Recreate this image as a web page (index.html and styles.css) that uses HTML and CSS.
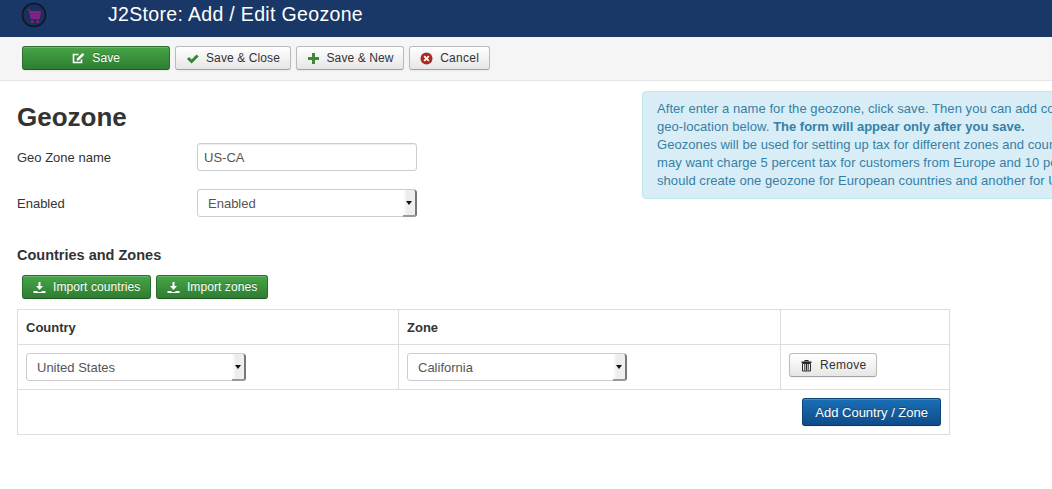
FILE: index.html
```html
<!DOCTYPE html>
<html>
<head>
  <title>J2Store: Add / Edit Geozone</title>
  <link rel="stylesheet" href="styles.css">
</head>
<body>

<header class="page-header">
  <svg class="logo" width="26" height="26" viewBox="0 0 26 26">
    <circle cx="13" cy="13" r="11.5" fill="#1a2f5c" stroke="#12151f" stroke-width="1.5"/>
    <path d="M6.5 7.5h2l.8 2h10.200l-1.200 7h-8.200l-1.600-8" fill="#8f1f86" stroke="#8f1f86" stroke-width="1"/>
    <path d="M11.500 9.500v7M14 9.500v7M16.500 9.500v7M9.500 12h10M10 14.500h9" stroke="#5f2a7c" stroke-width=".6"/>
    <rect x="10" y="18.500" width="2.400" height="2.400" fill="#8f1f86"/>
    <rect x="15.500" y="18.500" width="2.400" height="2.400" fill="#8f1f86"/>
  </svg>
  <h1 class="page-title">J2Store: Add / Edit Geozone</h1>
</header>

<div class="toolbar">
  <button type="button" class="btn btn-success btn-save">
    <svg class="icon" width="13" height="13" viewBox="0 0 13 13"><path d="M9.500 7.500v3h-8v-8h5" fill="none" stroke="#fff" stroke-width="1.600"/><path d="M5 6.500 10.500 1l1.800 1.800L6.800 8.300 4.600 8.700z" fill="#fff"/></svg>
    Save
  </button>
  <button type="button" class="btn">
    <svg class="icon" width="13" height="13" viewBox="0 0 13 13"><path d="M1 7l2-2 2.600 2.600L10.600 2.500l2 2-7 7z" fill="#2f8534"/></svg>
    Save &amp; Close
  </button>
  <button type="button" class="btn">
    <svg class="icon" width="13" height="13" viewBox="0 0 13 13"><path d="M5 1h3v4h4v3H8v4H5V8H1V5h4z" fill="#3d8b37"/></svg>
    Save &amp; New
  </button>
  <button type="button" class="btn btn-loose">
    <svg class="icon" width="13" height="13" viewBox="0 0 13 13"><circle cx="6.500" cy="6.500" r="6" fill="#a92a20"/><path d="M4.200 4.200l4.600 4.600M8.800 4.200L4.200 8.800" stroke="#fff" stroke-width="1.800"/></svg>
    Cancel
  </button>
</div>

<main class="content">
  <div class="top-row">
    <form class="geo-form" action="#" method="post">
      <h2 class="form-title">Geozone</h2>
      <div class="form-row">
        <label class="form-label" for="id_name">Geo Zone name</label>
        <input class="text-input" type="text" id="id_name" value="US-CA">
      </div>
      <div class="form-row">
        <label class="form-label" for="id_enabled">Enabled</label>
        <div class="select-box">
          <select id="id_enabled"><option>Enabled</option><option>Disabled</option></select>
        </div>
      </div>
    </form>

    <div class="alert-info">
      After enter a name for the geozone, click save. Then you can add countries and zones to this<br>
      geo-location below. <b>The form will appear only after you save.</b><br>
      Geozones will be used for setting up tax for different zones and countries. For example, you<br>
      may want charge 5 percent tax for customers from Europe and 10 percent for the US. So you<br>
      should create one geozone for European countries and another for US customers.
    </div>
  </div>

  <h3 class="section-title">Countries and Zones</h3>

  <div class="import-row">
    <button type="button" class="btn btn-success">
      <svg class="icon" width="13" height="13" viewBox="0 0 13 13"><path d="M5.500 1h2v4h2.500L6.500 9 3 5h2.500z" fill="#fff"/><path d="M.5 10h3.500l1 1h3l1-1h3.500v2H.5z" fill="#fff"/></svg>
      Import countries
    </button>
    <button type="button" class="btn btn-success">
      <svg class="icon" width="13" height="13" viewBox="0 0 13 13"><path d="M5.500 1h2v4h2.500L6.500 9 3 5h2.500z" fill="#fff"/><path d="M.5 10h3.500l1 1h3l1-1h3.500v2H.5z" fill="#fff"/></svg>
      Import zones
    </button>
  </div>

  <table class="zone-table">
    <tr class="head-row">
      <th class="col-country">Country</th>
      <th class="col-zone">Zone</th>
      <th></th>
    </tr>
    <tr class="zone-row">
      <td>
        <div class="select-box">
          <select><option>United States</option></select>
        </div>
      </td>
      <td>
        <div class="select-box">
          <select><option>California</option></select>
        </div>
      </td>
      <td>
        <button type="button" class="btn btn-loose">
          <svg class="icon" width="13" height="13" viewBox="0 0 13 13"><path d="M1.500 2.500h10V4h-10zM4.500 2.500V1h4v1.500h-1V2h-2v.5z" fill="#2a2a2a"/><path d="M2.500 4.500h8v7.500h-8z" fill="none" stroke="#2a2a2a" stroke-width="1"/><path d="M4.800 5v6.500M6.500 5v6.500M8.200 5v6.500" stroke="#2a2a2a" stroke-width="1"/></svg>
          Remove
        </button>
      </td>
    </tr>
    <tr class="foot-row">
      <td colspan="3">
        <button type="button" class="btn btn-primary">Add Country / Zone</button>
      </td>
    </tr>
  </table>
</main>

</body>
</html>
```

FILE: styles.css
```css
html, body {
  margin: 0;
  height: 100%;
  overflow: hidden;
}

body {
  font: 13px/18px "Liberation Sans", Arial, sans-serif;
  color: #333;
  background-color: #fff;
}

.page-header {
  display: flex;
  align-items: center;
  height: 37px;
  padding-left: 21px;
  background-color: #1a3867;
  box-sizing: border-box;
}

.logo {
  margin-top: -8px;
}

.page-title {
  margin: -9px 0 0 61px;
  font-size: 19.500px;
  line-height: 28px;
  font-weight: normal;
  letter-spacing: .33px;
  color: #fff;
}

.toolbar {
  display: flex;
  gap: 5px;
  height: 44px;
  padding: 9px 0 0 22px;
  box-sizing: border-box;
  background-color: #f5f5f5;
  border-bottom: 1px solid #e5e5e5;
}

.btn {
  display: inline-flex;
  align-items: center;
  justify-content: center;
  gap: 7px;
  height: 24px;
  padding: 0 9.600px 0 10px;
  font: 12px/18px "Liberation Sans", Arial, sans-serif;
  letter-spacing: .1px;
  color: #333;
  background: linear-gradient(#fff, #e6e6e6);
  border: 1px solid #bbb;
  border-bottom-color: #a2a2a2;
  border-radius: 3px;
  box-shadow: inset 0 1px 0 rgba(255, 255, 255, .2), 0 1px 2px rgba(0, 0, 0, .05);
  cursor: pointer;
}

.btn-success {
  color: #fff;
  background: linear-gradient(#46a546, #2f7d32);
  border-color: #2a6d2d #2a6d2d #1e5a21;
  text-shadow: 0 -1px 0 rgba(0, 0, 0, .25);
}

.btn-save {
  width: 148px;
}

.btn-loose {
  letter-spacing: .3px;
}

.btn-primary {
  height: 28px;
  padding: 2px 12px 0;
  font-size: 13px;
  letter-spacing: 0;
  color: #fff;
  background: linear-gradient(#1a6fb5, #0f4c8a);
  border-color: #0e4478 #0e4478 #0a3563;
  text-shadow: 0 -1px 0 rgba(0, 0, 0, .25);
}

.content {
  padding-left: 17px;
}

.top-row {
  display: flex;
  align-items: flex-start;
}

.geo-form {
  flex: none;
  width: 625px;
}

.form-title {
  margin: 20px 0 10px;
  font-size: 26px;
  line-height: 32px;
  font-weight: bold;
}

.form-row {
  display: flex;
  align-items: center;
  margin-bottom: 18px;
}

.form-label {
  width: 180px;
  margin-top: 2px;
}

.text-input {
  width: 220px;
  height: 28px;
  padding: 4px 6px;
  box-sizing: border-box;
  font: 13px/18px "Liberation Sans", Arial, sans-serif;
  color: #555;
  border: 1px solid #ccc;
  border-radius: 3px;
  box-shadow: inset 0 1px 1px rgba(0, 0, 0, .075);
}

.alert-info {
  flex: none;
  width: 600px;
  margin-top: 10px;
  padding: 8px 14px;
  white-space: nowrap;
  letter-spacing: .06px;
  color: #3580a5;
  background-color: #d9edf7;
  border: 1px solid #bce8f1;
  border-radius: 4px;
}

.alert-info b {
  letter-spacing: 0;
}

.select-box {
  position: relative;
  width: 220px;
  height: 28px;
}

.select-box select {
  appearance: none;
  display: block;
  width: 100%;
  height: 28px;
  padding: 2px 10px 0;
  font: 13px/18px "Liberation Sans", Arial, sans-serif;
  color: #555;
  background-color: #fff;
  border: 1px solid #ccc;
  border-radius: 3px;
}

/* the scroll-arrow block on the right of the select */
.select-box::after {
  content: "";
  position: absolute;
  top: 1px;
  right: 0;
  bottom: 0;
  width: 14px;
  box-sizing: border-box;
  background: linear-gradient(to right, #fff, #ececec 35%, #f0f0f0);
  border-right: 2px solid #777;
  border-bottom: 2px solid #999;
  border-radius: 0 3px 3px 0;
  pointer-events: none;
}

.select-box::before {
  content: "";
  position: absolute;
  z-index: 1;
  top: 12px;
  right: 5px;
  border-left: 3px solid transparent;
  border-right: 3px solid transparent;
  border-top: 4px solid #111;
  pointer-events: none;
}

.section-title {
  margin: 10px 0;
  font-size: 14.500px;
  line-height: 20px;
  font-weight: bold;
}

.import-row {
  display: flex;
  gap: 5px;
  margin: 0 0 10px 5px;
}

.import-row .btn {
  letter-spacing: .08px;
}

.zone-table {
  width: 933px;
  border-collapse: collapse;
  table-layout: fixed;
}

.zone-table th,
.zone-table td {
  padding: 8px;
  text-align: left;
  border: 1px solid #ddd;
}

.zone-table th {
  height: 18px;
  padding: 9px 8px 7px;
}

.col-country {
  width: 364px;
}

.col-zone {
  width: 365px;
}

.zone-row td {
  vertical-align: top;
}

.zone-table .foot-row td {
  text-align: right;
}
```
